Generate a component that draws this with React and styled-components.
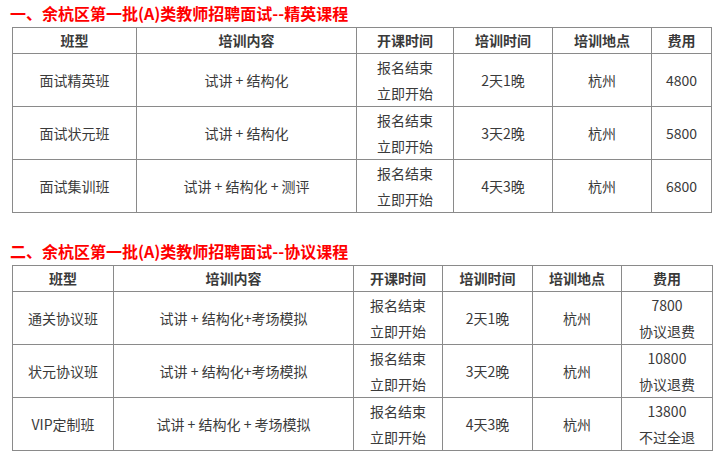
import styled, { createGlobalStyle } from 'styled-components';

const GlobalStyle = createGlobalStyle`
  body {
    margin: 0;
    background: #ffffff;
    font-family: 'Noto Sans CJK SC', 'Microsoft YaHei', sans-serif;
  }
`;

const Page = styled.div`
  padding: 0 3px 0 12px;
  width: 700px;
`;

const Title = styled.h2`
  margin: ${(p) => (p.$first ? '0' : '25px')} 0 0 -2px;
  height: 27px;
  line-height: 27px;
  font-size: 16px;
  font-weight: bold;
  color: #ff0000;
  white-space: nowrap;
`;

const Table = styled.table`
  border-collapse: collapse;
  width: ${(p) => p.$width}px;
  table-layout: fixed;
  border: 1px solid #333333;
  font-size: 14px;
  color: #3a3a3a;
`;

const HeadCell = styled.th`
  height: 25px;
  padding: 0;
  border: 1px solid #8a8a8a;
  font-weight: bold;
  text-align: center;
  vertical-align: middle;
  line-height: 25px;
`;

const Cell = styled.td`
  height: 52px;
  padding: 0;
  border: 1px solid #8a8a8a;
  text-align: center;
  vertical-align: middle;
  line-height: 26px;
`;

const headers = ['班型', '培训内容', '开课时间', '培训时间', '培训地点', '费用'];

const eliteCols = [124, 220, 97, 99, 99, 60];
const eliteRows = [
  ['面试精英班', '试讲 + 结构化', ['报名结束', '立即开始'], '2天1晚', '杭州', ['4800']],
  ['面试状元班', '试讲 + 结构化', ['报名结束', '立即开始'], '3天2晚', '杭州', ['5800']],
  ['面试集训班', '试讲 + 结构化 + 测评', ['报名结束', '立即开始'], '4天3晚', '杭州', ['6800']],
];

const dealCols = [101, 240, 89, 90, 89, 91];
const dealRows = [
  ['通关协议班', '试讲 + 结构化+考场模拟', ['报名结束', '立即开始'], '2天1晚', '杭州', ['7800', '协议退费']],
  ['状元协议班', '试讲 + 结构化+考场模拟', ['报名结束', '立即开始'], '3天2晚', '杭州', ['10800', '协议退费']],
  ['VIP定制班', '试讲 + 结构化 + 考场模拟', ['报名结束', '立即开始'], '4天3晚', '杭州', ['13800', '不过全退']],
];

const Lines = ({ lines }) =>
  lines.map((line, i) => (
    <span key={i}>
      {i > 0 && <br />}
      {line}
    </span>
  ));

const CourseTable = ({ cols, rows }) => (
  <Table $width={cols.reduce((a, b) => a + b, 0)}>
    <colgroup>
      {cols.map((w, i) => (
        <col key={i} style={{ width: w }} />
      ))}
    </colgroup>
    <thead>
      <tr>
        {headers.map((h) => (
          <HeadCell key={h}>{h}</HeadCell>
        ))}
      </tr>
    </thead>
    <tbody>
      {rows.map((row, r) => (
        <tr key={r}>
          {row.map((value, c) => (
            <Cell key={c}>{Array.isArray(value) ? <Lines lines={value} /> : value}</Cell>
          ))}
        </tr>
      ))}
    </tbody>
  </Table>
);

const App = () => (
  <>
    <GlobalStyle />
    <Page>
      <Title $first>一、余杭区第一批(A)类教师招聘面试--精英课程</Title>
      <CourseTable cols={eliteCols} rows={eliteRows} />
      <Title>二、余杭区第一批(A)类教师招聘面试--协议课程</Title>
      <CourseTable cols={dealCols} rows={dealRows} />
    </Page>
  </>
);

export default App;
